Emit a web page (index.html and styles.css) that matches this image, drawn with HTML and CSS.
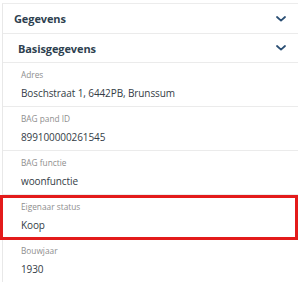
FILE: index.html
```html
<!DOCTYPE html>
<html>
<head>
<meta charset="utf-8">
<link rel="stylesheet" href="styles.css">
</head>
<body>
<div class="panel">
  <div class="head head-main">
    <span class="head-title">Gegevens</span>
    <svg class="chev" width="10" height="6" viewBox="0 0 10 6"><path d="M1 1 L5 4.6 L9 1" fill="none" stroke="#2b4f74" stroke-width="1.8" stroke-linecap="round" stroke-linejoin="round"/></svg>
  </div>
  <div class="head head-sub">
    <span class="head-title">Basisgegevens</span>
    <svg class="chev" width="10" height="6" viewBox="0 0 10 6"><path d="M1 1 L5 4.6 L9 1" fill="none" stroke="#2b4f74" stroke-width="1.8" stroke-linecap="round" stroke-linejoin="round"/></svg>
  </div>
  <div class="field">
    <div class="label">Adres</div>
    <div class="value">Boschstraat 1, 6442PB, Brunssum</div>
  </div>
  <div class="field">
    <div class="label">BAG pand ID</div>
    <div class="value">899100000261545</div>
  </div>
  <div class="field">
    <div class="label">BAG functie</div>
    <div class="value">woonfunctie</div>
  </div>
  <div class="field field-marked">
    <div class="label">Eigenaar status</div>
    <div class="value">Koop</div>
    <div class="mark"></div>
  </div>
  <div class="field field-last">
    <div class="label">Bouwjaar</div>
    <div class="value">1930</div>
  </div>
</div>
</body>
</html>
```

FILE: styles.css
```css
html, body {
  margin: 0;
  padding: 0;
  background: #ffffff;
}

body {
  width: 300px;
  height: 282px;
  overflow: hidden;
  font-family: "Open Sans", "Noto Sans", sans-serif;
}

.panel {
  margin: 3px 2px 0 2px;
  width: 295px;
  border-left: 1px solid #e8e8e8;
  border-top: 1px solid #ececec;
}

.head {
  display: flex;
  align-items: center;
  justify-content: space-between;
  border-bottom: 1px solid #ebebeb;
  padding-right: 12px;
}

.head-main {
  height: 29px;
  padding-left: 11px;
}

.head-sub {
  height: 28px;
  padding-left: 15px;
}

.head-title {
  font-size: 11px;
  font-weight: 700;
  color: #2e3f50;
  letter-spacing: -0.1px;
}

.chev {
  display: block;
}

.field {
  position: relative;
  height: 43px;
  border-bottom: 1px solid #ebebeb;
  padding-left: 18px;
  box-sizing: content-box;
}

.field-last {
  border-bottom: none;
}

.label {
  padding-top: 5px;
  font-size: 8.3px;
  line-height: 14px;
  color: #8e8e8e;
}

.value {
  margin-top: 2px;
  font-size: 10px;
  line-height: 18px;
  letter-spacing: -0.1px;
  color: #343c46;
}

.mark {
  position: absolute;
  left: -3px;
  right: 0;
  top: 0;
  height: 45px;
  box-sizing: border-box;
  border: 3px solid #e31b1b;
}
```
